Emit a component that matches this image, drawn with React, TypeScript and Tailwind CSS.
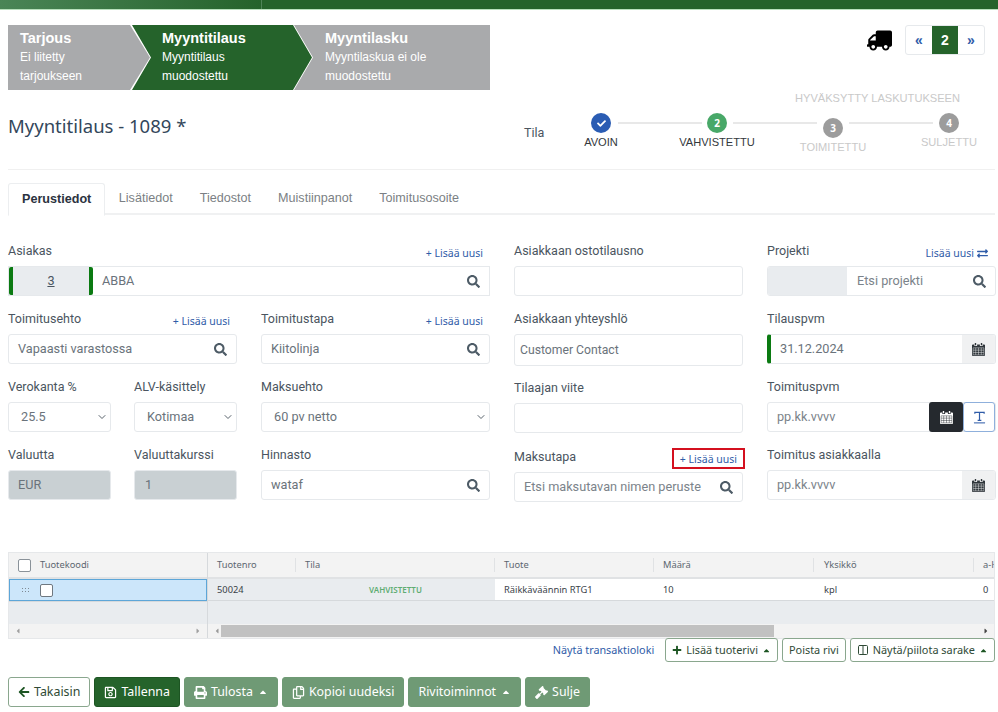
import React from "react";
import { ChevronDown, Columns2 } from "lucide-react";
import {
  FaArrowLeft,
  FaCaretLeft,
  FaCaretRight,
  FaCaretUp,
  FaCheck,
  FaExchangeAlt,
  FaGavel,
  FaPlus,
  FaPrint,
  FaRegCopy,
  FaRegSave,
  FaSearch,
  FaTruck,
} from "react-icons/fa";

const ui = "font-['Noto_Sans',sans-serif]";

const CalendarIcon = ({ className = "" }: { className?: string }) => (
  <svg viewBox="0 0 14 14" className={`w-[13px] h-[13px] ${className}`} fill="currentColor">
    <path d="M3 0h1.5v2.5H3zM9.500 0H11v2.500H9.500z" />
    <path d="M1 1.500h1.500V3.200h3V1.500h3V3.200h3V1.500H13a1 1 0 0 1 1 1V13a1 1 0 0 1-1 1H1a1 1 0 0 1-1-1V2.500a1 1 0 0 1 1-1z" />
    <g fill="none" stroke="#f0f1f2" strokeWidth="0.7" className="opacity-70">
      <path d="M1.200 5.200h11.600v7.600H1.200zM1.200 7.700h11.600M1.200 10.200h11.600M4 5.200v7.600M7 5.200v7.600M10 5.200v7.600" />
    </g>
  </svg>
);

const TextModeIcon = () => (
  <svg viewBox="0 0 14 14" className="w-[13px] h-[13px] text-[#2f5ca8]" fill="none" stroke="currentColor">
    <path d="M2 3V1.500h10V3M7 1.500V10M5 10h4" strokeWidth="1.300" />
    <path d="M1 12.800h12" strokeWidth="1.100" />
  </svg>
);

const AddNew = ({ boxed }: { boxed?: boolean }) => (
  <span
    className={`text-[10.500px] leading-[14px] text-[#2f5ca8] ${ui} ${
      boxed ? "border-[2px] border-[#d4101f] px-[6px] py-[1.500px] mr-[-2px] mb-[-3px]" : "mr-[7px]"
    }`}
  >
    + Lisää uusi
  </span>
);

const Field = ({ label, action, children, className = "" }: { label: string; action?: React.ReactNode; children: React.ReactNode; className?: string }) => (
  <div className={`flex flex-col h-[68px] ${className}`}>
    <div className="flex items-end justify-between h-[30px] pb-[6px]">
      <span className="text-[12.500px] leading-[17px] text-[#4a5560] font-['Roboto',sans-serif] mb-[1px]">{label}</span>
      {action}
    </div>
    {children}
  </div>
);

const Box = ({ children, className = "" }: { children?: React.ReactNode; className?: string }) => (
  <div className={`flex items-center h-[30px] border border-[#e6e9ec] rounded-[3px] bg-white text-[12.700px] text-[#6a737b] font-['Roboto',sans-serif] overflow-hidden ${className}`}>
    {children}
  </div>
);

const SearchBox = ({ value, muted }: { value: string; muted?: boolean }) => (
  <Box className="pl-[9px] pr-[9px] justify-between">
    <span className={muted ? "text-[#7b838a]" : ""}>{value}</span>
    <FaSearch className="text-[13px] text-[#4d5b66] shrink-0" />
  </Box>
);

const SelectBox = ({ value }: { value: string }) => (
  <Box className="pl-[12px] pr-[2px] justify-between">
    <span>{value}</span>
    <ChevronDown size={12} className="text-[#59636c] shrink-0" />
  </Box>
);

const DateBox = ({ value, green }: { value: string; green?: boolean }) => (
  <Box className={`justify-between ${green ? "border-l-[4px] border-l-[#0b7a12]" : ""}`}>
    <span className={green ? "pl-[9px]" : "pl-[9px] text-[#7b838a]"}>{value}</span>
    <span className="flex items-center justify-center w-[33px] h-full bg-[#f0f1f2]">
      <CalendarIcon className="text-[#2f363b]" />
    </span>
  </Box>
);

const Step = ({ n, label, done, color, low, dim }: { n?: string; label: string; done?: boolean; color: string; low?: boolean; dim?: boolean }) => (
  <div className={`flex flex-col items-center w-[116px] shrink-0 ${low ? "pt-[8px]" : "pt-[3px]"}`}>
    <span className={`flex items-center justify-center w-[20px] h-[20px] rounded-full text-[10px] font-bold text-white ${color}`}>
      {done ? <FaCheck className="text-[9px]" /> : n}
    </span>
    <span className={`mt-[2px] text-[11.100px] leading-[14px] font-['Liberation_Sans',sans-serif] ${dim ? "text-[#c9c9c9]" : "text-[#33383c]"}`}>{label}</span>
  </div>
);

const Chevron = ({ title, lines, className }: { title: string; lines: string[]; className: string }) => (
  <div className={`h-[65px] pt-[4px] text-white font-['Liberation_Sans',sans-serif] shrink-0 ${className}`}>
    <div className="text-[14.500px] leading-[19px] font-bold">{title}</div>
    {lines.map((l) => (
      <div key={l} className="text-[12px] leading-[19px]">{l}</div>
    ))}
  </div>
);

const GreenButton = ({ children, solid }: { children: React.ReactNode; solid?: boolean }) => (
  <button className={`flex items-center gap-[4px] h-[30px] px-[9px] rounded-[3px] text-[12.400px] text-white border whitespace-nowrap ${ui} ${solid ? "bg-[#25632b] border-[#1d5523]" : "bg-[#6f9a75] border-[#6f9a75]"}`}>
    {children}
  </button>
);

const OutlineButton = ({ children }: { children: React.ReactNode }) => (
  <button className={`flex items-center gap-[4px] h-[24px] px-[6px] rounded-[3px] border border-[#8aa78e] bg-white text-[10.900px] text-[#2f4a36] whitespace-nowrap ${ui}`}>
    {children}
  </button>
);

export default function App() {
  return (
    <div className="w-[998px] h-[712px] overflow-hidden bg-white">
      <div className="flex h-[10px] border-b border-[#b8e0bc]">
        <div className="w-[262px] bg-gradient-to-r from-[#4a8556] to-[#25632b] border-r border-[#4f8458]" />
        <div className="flex-1 bg-[#25632b]" />
      </div>

      <div className="pl-[8px] pr-[3px]">
        <div className="flex justify-between pt-[15px]">
          <div className="flex w-[482px]">
            <Chevron
              title="Tarjous"
              lines={["Ei liitetty", "tarjoukseen"]}
              className="w-[142px] pl-[12px] bg-[#a9aaac] [clip-path:polygon(0_0,122px_0,142px_50%,122px_100%,0_100%)]"
            />
            <Chevron
              title="Myyntitilaus"
              lines={["Myyntitilaus", "muodostettu"]}
              className="w-[180px] ml-[-18px] pl-[30px] bg-[#25632b] [clip-path:polygon(0_0,161px_0,180px_50%,161px_100%,0_100%,19px_50%)]"
            />
            <Chevron
              title="Myyntilasku"
              lines={["Myyntilaskua ei ole", "muodostettu"]}
              className="w-[196px] ml-[-18px] pl-[31px] bg-[#a9aaac] [clip-path:polygon(0_0,100%_0,100%_100%,0_100%,19px_50%)]"
            />
          </div>
          <div className="flex items-start pr-[10px]">
            <FaTruck className="text-[25px] text-black mt-[3px] mr-[13px] scale-x-[-1]" />
            <div className="flex h-[30px] w-[80px] border border-[#e6e9ec] rounded-[3px] text-[14px] font-bold font-['Liberation_Sans',sans-serif]">
              <span className="flex-1 flex items-center justify-center text-[#2f5ca8]">«</span>
              <span className="flex-1 flex items-center justify-center bg-[#25632b] text-white">2</span>
              <span className="flex-1 flex items-center justify-center text-[#2f5ca8]">»</span>
            </div>
          </div>
        </div>

        <div className="flex h-[80px] border-b border-[#f0f0f0]">
          <div className={`w-[516px] shrink-0 pt-[21px] text-[18.500px] leading-[30px] text-[#33475b] ${ui}`}>Myyntitilaus - 1089 *</div>
          <div className="flex flex-col flex-1 min-w-0">
            <div className="h-[20px] pt-[1px] pl-[271px] text-[11.100px] leading-[14px] text-[#c9c9c9] whitespace-nowrap font-['Liberation_Sans',sans-serif]">HYVÄKSYTTY LASKUTUKSEEN</div>
            <div className="flex">
              <span className="w-[19px] pt-[14px] text-[12.500px] leading-[17px] text-[#4a5560] font-['Roboto',sans-serif] shrink-0">Tila</span>
              <div className="relative flex">
                <Step label="AVOIN" done color="bg-[#2a5cb3]" />
                <Step n="2" label="VAHVISTETTU" color="bg-[#48a868]" />
                <Step n="3" label="TOIMITETTU" color="bg-[#9c9c9c]" low dim />
                <Step n="4" label="SULJETTU" color="bg-[#9c9c9c]" dim />
                <span className="absolute left-[75px] top-[12px] w-[84px] h-[2px] bg-[#e8e8e8]" />
                <span className="absolute left-[190px] top-[12px] w-[84px] h-[2px] bg-[#e8e8e8]" />
                <span className="absolute left-[306px] top-[12px] w-[84px] h-[2px] bg-[#e8e8e8]" />
              </div>
            </div>
          </div>
        </div>

        <div className="flex h-[32px] mt-[13px] border-b-[2px] border-[#f0f1f2] text-[12.600px] font-['Liberation_Sans',sans-serif] text-[#7b7f84]">
          <span className="flex items-center h-[33px] px-[13px] border border-[#eceef0] border-b-white bg-white rounded-t-[3px] font-bold text-[#2b3240]">Perustiedot</span>
          <span className="flex items-center px-[13.500px]">Lisätiedot</span>
          <span className="flex items-center px-[13.500px]">Tiedostot</span>
          <span className="flex items-center px-[13.500px]">Muistiinpanot</span>
          <span className="flex items-center px-[13.500px]">Toimitusosoite</span>
        </div>

        <div className="grid grid-cols-[482px_229px_229px] gap-x-[24px] mt-[21px]">
          <div className="flex flex-col">
            <Field label="Asiakas" action={<AddNew />}>
              <div className="flex items-center h-[30px] border border-[#e6e9ec] text-[12.700px] text-[#6a737b] font-['Roboto',sans-serif]">
                <span className="flex items-center justify-center w-[84px] h-full bg-[#e9ecef] border-x-[4px] border-x-[#0b7a12] rounded-[2px] underline text-[#4a5560]">3</span>
                <span className="flex-1 pl-[9px]">ABBA</span>
                <FaSearch className="text-[13px] text-[#4d5b66] mr-[9px]" />
              </div>
            </Field>
            <div className="grid grid-cols-2 gap-x-[24px]">
              <Field label="Toimitusehto" action={<AddNew />}><SearchBox value="Vapaasti varastossa" /></Field>
              <Field label="Toimitustapa" action={<AddNew />}><SearchBox value="Kiitolinja" /></Field>
              <div className="grid grid-cols-[103px_103px] gap-x-[23px]">
                <Field label="Verokanta %"><SelectBox value="25.5" /></Field>
                <Field label="ALV-käsittely"><SelectBox value="Kotimaa" /></Field>
              </div>
              <Field label="Maksuehto"><SelectBox value="60 pv netto" /></Field>
              <div className="grid grid-cols-[103px_103px] gap-x-[23px]">
                <Field label="Valuutta">
                  <Box className="pl-[9px] !bg-[#c9d0d3] border-[#c9d0d3]">EUR</Box>
                </Field>
                <Field label="Valuuttakurssi">
                  <Box className="pl-[10px] !bg-[#c9d0d3] border-[#c9d0d3]">1</Box>
                </Field>
              </div>
              <Field label="Hinnasto"><SearchBox value="wataf" /></Field>
            </div>
          </div>

          <div className="flex flex-col">
            <Field label="Asiakkaan ostotilausno"><Box /></Field>
            <Field label="Asiakkaan yhteyshlö">
              <Box className="pl-[5px] !h-[32px] !text-[12.200px]">Customer Contact</Box>
            </Field>
            <Field label="Tilaajan viite" className="mt-[1px]"><Box /></Field>
            <Field label="Maksutapa" action={<AddNew boxed />} className="mt-[1px]">
              <SearchBox value="Etsi maksutavan nimen peruste" muted />
            </Field>
          </div>

          <div className="flex flex-col">
            <Field
              label="Projekti"
              action={
                <span className={`flex items-center gap-[3px] mr-[8px] text-[10.500px] leading-[14px] text-[#2f5ca8] ${ui}`}>
                  Lisää uusi <FaExchangeAlt className="text-[11px]" />
                </span>
              }
            >
              <Box className="justify-between pr-[9px]">
                <span className="w-[79px] h-full bg-[#e9ecef]" />
                <span className="flex-1 pl-[10px] text-[#7b838a]">Etsi projekti</span>
                <FaSearch className="text-[13px] text-[#4d5b66]" />
              </Box>
            </Field>
            <Field label="Tilauspvm"><DateBox value="31.12.2024" green /></Field>
            <Field label="Toimituspvm">
              <Box className="justify-between !overflow-visible">
                <span className="pl-[9px] text-[#7b838a]">pp.kk.vvvv</span>
                <span className="flex h-[30px]">
                  <span className="flex items-center justify-center w-[34px] bg-[#25292e] rounded-[3px]">
                    <CalendarIcon className="text-white [&_g]:stroke-[#25292e]" />
                  </span>
                  <span className="flex items-center justify-center w-[32px] border border-[#8fb0dc] rounded-[3px] bg-white">
                    <TextModeIcon />
                  </span>
                </span>
              </Box>
            </Field>
            <Field label="Toimitus asiakkaalla"><DateBox value="pp.kk.vvvv" /></Field>
          </div>
        </div>

        <div className={`flex h-[87px] w-[987px] mt-[42px] border border-[#e6e8ea] text-[9.300px] ${ui}`}>
          <div className="flex flex-col w-[199px] shrink-0 border-r border-[#d6d9dc]">
            <div className="flex items-center h-[26px] pl-[9px] gap-[9px] bg-[#f3f3f3] border-b-[2px] border-[#e0e2e4] text-[#5c6670]">
              <span className="w-[13px] h-[13px] rounded-[2px] border border-[#8a9299] bg-white" />
              Tuotekoodi
            </div>
            <div className="flex items-center h-[22px] pl-[11px] gap-[10px] bg-[#cce6fa] border border-[#5da6d8]">
              <span className="w-[9px] h-[7px] bg-[radial-gradient(#7f8a94_1px,transparent_1px)] bg-[length:3px_3px]" />
              <span className="w-[13px] h-[13px] rounded-[2px] border border-[#6f7880] bg-white" />
            </div>
            <div className="h-[23px] bg-[#e9ecef] border-t border-[#d6d9dc]" />
            <div className="flex-1 flex items-center justify-between px-[5px] bg-[#f3f3f3] text-[8px] text-[#a0a0a0]">
              <FaCaretLeft />
              <FaCaretRight />
            </div>
          </div>
          <div className="flex flex-col flex-1 min-w-0 overflow-hidden">
            <div className="flex items-center h-[26px] bg-[#f3f3f3] border-b-[2px] border-[#e0e2e4] text-[#5c6670]">
              <span className="w-[88px] pl-[9px] border-r border-[#e0e2e4] shrink-0">Tuotenro</span>
              <span className="w-[199px] pl-[9px] border-r border-[#e0e2e4] shrink-0">Tila</span>
              <span className="w-[159px] pl-[9px] border-r border-[#e0e2e4] shrink-0">Tuote</span>
              <span className="w-[160px] pl-[9px] border-r border-[#e0e2e4] shrink-0">Määrä</span>
              <span className="w-[160px] pl-[10px] border-r border-[#e0e2e4] shrink-0">Yksikkö</span>
              <span className="pl-[9px] whitespace-nowrap">a-H</span>
            </div>
            <div className="flex items-center h-[22px] border-b border-[#d6d9dc] text-[#3a4249]">
              <span className="flex items-center h-full w-[88px] pl-[9px] bg-[#e9ecef] shrink-0">50024</span>
              <span className="flex items-center justify-center h-full w-[199px] bg-[#e9ecef] text-[8px] font-semibold text-[#5fad73] shrink-0">VAHVISTETTU</span>
              <span className="w-[159px] pl-[9px] shrink-0 whitespace-nowrap">Räikkäväännin RTG1</span>
              <span className="w-[160px] pl-[9px] shrink-0">10</span>
              <span className="w-[160px] pl-[10px] shrink-0">kpl</span>
              <span className="pl-[9px]">0</span>
            </div>
            <div className="h-[23px] bg-[#e9ecef]" />
            <div className="flex-1 flex items-center justify-between px-[5px] bg-[#f3f3f3] text-[8px] text-[#9a9a9a]">
              <FaCaretLeft className="shrink-0" />
              <span className="h-[12px] w-[553px] shrink-0 mr-[208px] bg-[#c1c1c1]" />
              <FaCaretRight className="shrink-0 text-[#444]" />
            </div>
          </div>
        </div>

        <div className="flex items-center justify-end gap-[4px] h-[24px] w-[987px] mt-[-1px]">
          <span className={`mr-[7px] text-[10.800px] text-[#2f5ca8] ${ui}`}>Näytä transaktioloki</span>
          <OutlineButton>
            <FaPlus className="text-[10px] text-[#1d5523]" /> Lisää tuoterivi <FaCaretUp className="text-[9px] text-[#1d5523]" />
          </OutlineButton>
          <OutlineButton>Poista rivi</OutlineButton>
          <OutlineButton>
            <Columns2 size={12} /> Näytä/piilota sarake <FaCaretUp className="text-[9px] text-[#1d5523]" />
          </OutlineButton>
        </div>

        <div className="flex gap-[4px] mt-[15px]">
          <button className={`flex items-center gap-[4px] h-[30px] px-[9px] rounded-[3px] border border-[#8aa78e] bg-white text-[12.400px] text-[#2f4a36] ${ui}`}>
            <FaArrowLeft className="text-[12px] text-[#1d5523]" /> Takaisin
          </button>
          <GreenButton solid><FaRegSave className="text-[13px]" /> Tallenna</GreenButton>
          <GreenButton><FaPrint className="text-[13px]" /> Tulosta <FaCaretUp className="text-[10px] ml-[1px]" /></GreenButton>
          <GreenButton><FaRegCopy className="text-[13px]" /> Kopioi uudeksi</GreenButton>
          <GreenButton>Rivitoiminnot <FaCaretUp className="text-[10px] ml-[1px]" /></GreenButton>
          <GreenButton><FaGavel className="text-[13px]" /> Sulje</GreenButton>
        </div>
      </div>
    </div>
  );
}
